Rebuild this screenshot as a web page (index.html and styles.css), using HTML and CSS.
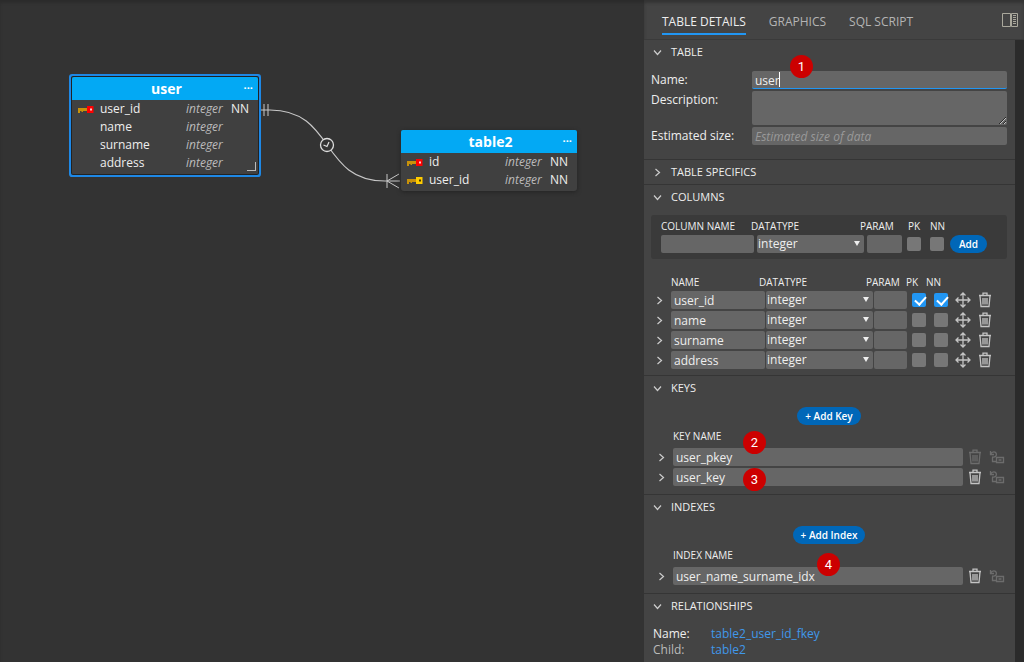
FILE: index.html
```
<!DOCTYPE html>
<html lang="en">
<head>
    <meta charset="UTF-8">
    <meta name="viewport" content="width=device-width, initial-scale=1.0">
    <title>Table details</title>
    <link rel="stylesheet" href="styles.css">
</head>
<body>
    <!-- shared icons -->
    <svg class="sprite" aria-hidden="true">
        <symbol id="down" viewBox="0 0 9 9"><path d="M1 2.5l3.5 4L8 2.5" fill="none" stroke="currentColor" stroke-width="1.2"/></symbol>
        <symbol id="right" viewBox="0 0 9 9"><path d="M2.5 1l4 3.5-4 3.5" fill="none" stroke="currentColor" stroke-width="1.2"/></symbol>
        <symbol id="trash" viewBox="0 0 14 16"><path d="M1 3.5h12M5 3V1.2h4V3M2 4l1 10.5h8L12 4M5 6v6.5M7 6v6.5M9 6v6.5" fill="none" stroke="currentColor" stroke-width="1.3"/></symbol>
        <symbol id="move" viewBox="0 0 16 16"><path d="M8 1v14M1 8h14M5.5 3.5L8 1l2.5 2.5M5.5 12.5L8 15l2.5-2.5M3.5 5.5L1 8l2.5 2.5M12.5 5.5L15 8l-2.5 2.5" fill="none" stroke="currentColor" stroke-width="1.3"/></symbol>
        <symbol id="relate" viewBox="0 0 16 14"><path d="M1.5 1v3.5H5M1.5 4.2C3 1.2 7 1 7.4 4.2 7.6 6.5 5.5 7.2 3 7.2M3.5 7.5v4h4M7.5 7.5h7v5h-7zM9.5 10h3" fill="none" stroke="currentColor" stroke-width="1.3"/></symbol>
        <symbol id="pkey" viewBox="0 0 16 9"><path d="M0 3h9v3H5v1H3.500V6H2v2H0z" fill="#c8920a"/><path d="M9 1h6.500v7H9z" fill="#f00"/><path d="M12 3.500h2v2h-2z" fill="#fcc"/></symbol>
        <symbol id="fkey" viewBox="0 0 16 9"><path d="M0 3h9v3H5v1H3.500V6H2v2H0z" fill="#c8920a"/><path d="M9 1h6.500v7H9z" fill="#fc0"/><path d="M12 3.500h2v2h-2z" fill="#4a3b00"/></symbol>
    </svg>

    <div class="app">
        <main class="canvas">
            <svg class="relation" width="644" height="220" fill="none" stroke="#c8c8c8">
                <path d="M260 110h10C335 110 320 181 385 181h15" stroke-width="1.2"/>
                <path d="M264 104v12M268 104v12M387 174v14M399 174l-12 7 12 7"/>
                <circle cx="327" cy="145" r="6.5" fill="#333" stroke="#ddd" stroke-width="1.3"/>
                <path d="M323.500 145l3.500 1.500 2-4.500" stroke="#ddd" stroke-width="1.200"/>
            </svg>

            <section class="entity selected entity-user">
                <h2>user<button class="more" aria-label="More">···</button></h2>
                <table>
                    <tr><td class="key"><svg><use href="#pkey"/></svg></td><td>user_id</td><td class="type">integer</td><td class="nn">NN</td></tr>
                    <tr><td class="key"></td><td>name</td><td class="type">integer</td><td class="nn"></td></tr>
                    <tr><td class="key"></td><td>surname</td><td class="type">integer</td><td class="nn"></td></tr>
                    <tr><td class="key"></td><td>address</td><td class="type">integer</td><td class="nn"></td></tr>
                </table>
                <span class="corner"></span>
            </section>

            <section class="entity entity-table2">
                <h2>table2<button class="more" aria-label="More">···</button></h2>
                <table>
                    <tr><td class="key"><svg><use href="#pkey"/></svg></td><td>id</td><td class="type">integer</td><td class="nn">NN</td></tr>
                    <tr><td class="key"><svg><use href="#fkey"/></svg></td><td>user_id</td><td class="type">integer</td><td class="nn">NN</td></tr>
                </table>
            </section>
        </main>

        <aside class="sidebar">
            <nav class="tabs">
                <button class="tab active">TABLE DETAILS</button>
                <button class="tab">GRAPHICS</button>
                <button class="tab">SQL SCRIPT</button>
                <button class="dock" aria-label="Dock panel">
                    <svg width="18" height="16" fill="none" stroke="#aaa89c"><path d="M1.500 1.500h8v13h-8zM10.500 1.500h6v13h-6z"/><path d="M13.500 3v10" stroke-width="3" stroke-dasharray="1 1"/></svg>
                </button>
            </nav>

            <div class="panels">
                <section class="panel">
                    <h3><svg class="chev"><use href="#down"/></svg>TABLE</h3>
                    <div class="details">
                        <label for="name">Name:</label>
                        <div class="name-field"><input type="text" id="name" class="current" value="user"><i class="caret"></i></div>
                        <label for="description">Description:</label>
                        <textarea id="description"></textarea>
                        <label for="size">Estimated size:</label>
                        <input type="text" id="size" placeholder="Estimated size of data">
                    </div>
                    <span class="badge badge-1">1</span>
                </section>

                <section class="panel">
                    <h3><svg class="chev"><use href="#right"/></svg>TABLE SPECIFICS</h3>
                </section>

                <section class="panel columns">
                    <h3><svg class="chev"><use href="#down"/></svg>COLUMNS</h3>
                    <form class="add-column">
                        <div class="add-labels">
                            <label for="new-name">COLUMN NAME</label>
                            <label for="new-type">DATATYPE</label>
                            <label for="new-param">PARAM</label>
                            <label for="new-pk">PK</label>
                            <label for="new-nn">NN</label>
                        </div>
                        <div class="add-fields">
                            <input type="text" id="new-name">
                            <span class="select"><select id="new-type"><option>integer</option></select></span>
                            <input type="text" id="new-param">
                            <input type="checkbox" id="new-pk">
                            <input type="checkbox" id="new-nn">
                            <button type="button" class="btn">Add</button>
                        </div>
                    </form>
                    <table class="column-list">
                        <thead>
                            <tr><th></th><th>NAME</th><th>DATATYPE</th><th>PARAM</th><th>PK</th><th>NN</th></tr>
                        </thead>
                        <tbody>
                            <tr>
                                <td><button class="icon" aria-label="Expand"><svg class="chev"><use href="#right"/></svg></button></td>
                                <td><input type="text" aria-label="Name" value="user_id"></td>
                                <td><span class="select"><select aria-label="Datatype"><option>integer</option></select></span></td>
                                <td><input type="text" aria-label="Param"></td>
                                <td><input type="checkbox" aria-label="PK" checked></td>
                                <td><input type="checkbox" aria-label="NN" checked></td>
                                <td><button class="icon" aria-label="Move"><svg class="move"><use href="#move"/></svg></button></td>
                                <td><button class="icon" aria-label="Delete"><svg class="trash"><use href="#trash"/></svg></button></td>
                            </tr>
                            <tr>
                                <td><button class="icon" aria-label="Expand"><svg class="chev"><use href="#right"/></svg></button></td>
                                <td><input type="text" aria-label="Name" value="name"></td>
                                <td><span class="select"><select aria-label="Datatype"><option>integer</option></select></span></td>
                                <td><input type="text" aria-label="Param"></td>
                                <td><input type="checkbox" aria-label="PK"></td>
                                <td><input type="checkbox" aria-label="NN"></td>
                                <td><button class="icon" aria-label="Move"><svg class="move"><use href="#move"/></svg></button></td>
                                <td><button class="icon" aria-label="Delete"><svg class="trash"><use href="#trash"/></svg></button></td>
                            </tr>
                            <tr>
                                <td><button class="icon" aria-label="Expand"><svg class="chev"><use href="#right"/></svg></button></td>
                                <td><input type="text" aria-label="Name" value="surname"></td>
                                <td><span class="select"><select aria-label="Datatype"><option>integer</option></select></span></td>
                                <td><input type="text" aria-label="Param"></td>
                                <td><input type="checkbox" aria-label="PK"></td>
                                <td><input type="checkbox" aria-label="NN"></td>
                                <td><button class="icon" aria-label="Move"><svg class="move"><use href="#move"/></svg></button></td>
                                <td><button class="icon" aria-label="Delete"><svg class="trash"><use href="#trash"/></svg></button></td>
                            </tr>
                            <tr>
                                <td><button class="icon" aria-label="Expand"><svg class="chev"><use href="#right"/></svg></button></td>
                                <td><input type="text" aria-label="Name" value="address"></td>
                                <td><span class="select"><select aria-label="Datatype"><option>integer</option></select></span></td>
                                <td><input type="text" aria-label="Param"></td>
                                <td><input type="checkbox" aria-label="PK"></td>
                                <td><input type="checkbox" aria-label="NN"></td>
                                <td><button class="icon" aria-label="Move"><svg class="move"><use href="#move"/></svg></button></td>
                                <td><button class="icon" aria-label="Delete"><svg class="trash"><use href="#trash"/></svg></button></td>
                            </tr>
                        </tbody>
                    </table>
                </section>

                <section class="panel">
                    <h3><svg class="chev"><use href="#down"/></svg>KEYS</h3>
                    <div class="items">
                        <button class="btn">+ Add Key</button>
                        <div class="caption">KEY NAME</div>
                        <div class="item">
                            <button class="icon" aria-label="Expand"><svg class="chev"><use href="#right"/></svg></button>
                            <input type="text" aria-label="Key name" value="user_pkey">
                            <button class="icon" aria-label="Delete" disabled><svg class="trash"><use href="#trash"/></svg></button>
                            <button class="icon" aria-label="Relate" disabled><svg class="move"><use href="#relate"/></svg></button>
                        </div>
                        <div class="item">
                            <button class="icon" aria-label="Expand"><svg class="chev"><use href="#right"/></svg></button>
                            <input type="text" aria-label="Key name" value="user_key">
                            <button class="icon" aria-label="Delete"><svg class="trash"><use href="#trash"/></svg></button>
                            <button class="icon" aria-label="Relate" disabled><svg class="move"><use href="#relate"/></svg></button>
                        </div>
                    </div>
                    <span class="badge badge-2">2</span>
                    <span class="badge badge-3">3</span>
                </section>

                <section class="panel">
                    <h3><svg class="chev"><use href="#down"/></svg>INDEXES</h3>
                    <div class="items">
                        <button class="btn">+ Add Index</button>
                        <div class="caption">INDEX NAME</div>
                        <div class="item">
                            <button class="icon" aria-label="Expand"><svg class="chev"><use href="#right"/></svg></button>
                            <input type="text" aria-label="Index name" value="user_name_surname_idx">
                            <button class="icon" aria-label="Delete"><svg class="trash"><use href="#trash"/></svg></button>
                            <button class="icon" aria-label="Relate" disabled><svg class="move"><use href="#relate"/></svg></button>
                        </div>
                    </div>
                    <span class="badge badge-4">4</span>
                </section>

                <section class="panel">
                    <h3><svg class="chev"><use href="#down"/></svg>RELATIONSHIPS</h3>
                    <dl>
                        <dt>Name:</dt><dd><a href="#">table2_user_id_fkey</a></dd>
                        <dt class="muted">Child:</dt><dd><a href="#">table2</a></dd>
                    </dl>
                </section>
            </div>
        </aside>
    </div>
</body>
</html>
```
FILE: styles.css
```
* {
    box-sizing: border-box;
}
body {
    margin: 0;
    background: #333;
    color: #eee;
    font: 12px/16px "Open Sans", sans-serif;
}
input, select, textarea, button {
    font: inherit;
    color: inherit;
    border: 0;
    margin: 0;
    padding: 0;
}
button {
    background: none;
    cursor: pointer;
}
.sprite {
    display: none;
}
.app {
    display: flex;
    height: 100vh;
    overflow: hidden;
    box-shadow: inset 0 3px 3px #2c2c2c;
}

/* diagram */
.canvas {
    flex: 1;
    position: relative;
    overflow: hidden;
}
.relation {
    position: absolute;
    left: 0;
    top: 0;
}
.entity {
    position: absolute;
    background: #404040;
    border-radius: 3px;
    box-shadow: 0 1px 4px #222;
}
.entity-user {
    left: 72px;
    top: 77px;
    width: 186px;
    height: 97px;
}
.entity-table2 {
    left: 401px;
    top: 130px;
    width: 176px;
    height: 61px;
}
.entity.selected {
    border-radius: 1px;
    box-shadow: 0 0 0 1px #222, 0 0 0 3px #1e88e5;
}
.entity h2 {
    position: relative;
    margin: 0;
    background: #03a9f4;
    border-radius: 2px 2px 0 0;
    color: #fff;
    font-size: 14px;
    line-height: 23px;
    padding-left: 3px;
    text-align: center;
}
.more {
    position: absolute;
    right: 5px;
    top: 0;
    font-size: 11px;
    font-weight: bold;
    line-height: 22px;
}
.entity table {
    width: 100%;
    border-collapse: collapse;
    table-layout: fixed;
}
.entity td {
    height: 18px;
    padding: 0;
}
.entity .key {
    width: 28px;
    padding-left: 6px;
}
.key svg {
    display: block;
    width: 16px;
    height: 9px;
}
.entity .type {
    width: 45px;
    color: #bbb;
    font-style: italic;
}
.entity .nn {
    width: 27px;
}
.corner {
    position: absolute;
    right: 2px;
    bottom: 3px;
    width: 9px;
    height: 9px;
    border: solid #bbb;
    border-width: 0 1px 1px 0;
}

/* side panel */
.sidebar {
    width: 380px;
    display: flex;
    flex-direction: column;
    background: #2b2b2b;
}
.tabs {
    display: flex;
    gap: 23px;
    height: 40px;
    padding: 7px 5px 4px 18px;
    background: #444;
    border-bottom: 1px solid #3a3a3a;
    box-shadow: inset 0 3px 3px #333;
}
.tab {
    padding-top: 3px;
    color: #b4b4b4;
    border-bottom: 2px solid transparent;
}
.tab.active {
    color: #eee;
    border-color: #2196f3;
}
.dock {
    margin-left: auto;
    padding-bottom: 3px;
}
.dock svg {
    display: block;
}
.panels {
    flex: 1;
    margin-right: 9px;
    background: #444;
    overflow: hidden;
}
.panel {
    position: relative;
    border-bottom: 1px solid #353535;
}
.panel h3 {
    display: flex;
    align-items: center;
    gap: 9px;
    margin: 0;
    padding-left: 9px;
    font-size: 11px;
    font-weight: normal;
    line-height: 24px;
    height: 24px;
}
.chev {
    display: block;
    width: 9px;
    height: 9px;
    color: #ccc;
}
input[type=text], textarea, select {
    display: block;
    width: 100%;
    min-width: 0;
    height: 18px;
    padding: 0 3px;
    background: #666;
    border-radius: 2px;
}
textarea {
    height: 34px;
}
input::placeholder {
    color: #999;
    font-style: italic;
}
.details {
    display: grid;
    grid-template-columns: 101px 1fr;
    gap: 2px 0;
    padding: 7px 8px 14px 7px;
}
.details label {
    padding-top: 1px;
}
.name-field {
    position: relative;
}
.details .current {
    padding-top: 1px;
    border-bottom: 1px solid #2196f3;
}
.caret {
    position: absolute;
    left: 27px;
    top: 1px;
    width: 1px;
    height: 15px;
    background: #fff;
}
.select {
    position: relative;
    display: block;
}
.select select {
    appearance: none;
    padding: 0 1px;
}
.select::after {
    content: "";
    position: absolute;
    right: 4px;
    top: 6px;
    border: solid transparent;
    border-width: 5px 3px 0;
    border-top-color: #eee;
    pointer-events: none;
}
input[type=checkbox] {
    appearance: none;
    display: block;
    width: 14px;
    height: 14px;
    background: #777;
    border-radius: 2px;
}
input[type=checkbox]:checked {
    background: #2196f3;
}
input[type=checkbox]:checked::after {
    content: "";
    display: block;
    width: 5px;
    height: 9px;
    margin: 1px 0 0 5px;
    border: solid #fff;
    border-width: 0 2px 2px 0;
    transform: rotate(42deg);
}
.btn {
    background: #0067b8;
    border-radius: 9px;
    color: #fff;
    font-size: 10px;
    font-weight: 600;
    line-height: 18px;
    padding: 0 8px;
}

.add-column {
    margin: 6px 8px 15px 7px;
    padding: 3px 10px 6px;
    background: #3a3a3a;
    border-radius: 3px;
}
.add-labels, .add-fields {
    display: grid;
    align-items: center;
}
.add-labels {
    grid-template-columns: 90px 109px 48px 22px 1fr;
    font-size: 10px;
    line-height: 17px;
}
.add-fields {
    grid-template-columns: 93px 107px 35px 20px 19px 37px;
    column-gap: 3px;
}
.add-fields input[type=checkbox] {
    margin-left: 2px;
}
.column-list {
    display: block;
    padding: 0 7px 5px;
}
.column-list thead, .column-list tbody {
    display: block;
}
.column-list tr {
    display: grid;
    align-items: center;
    grid-template-columns: 20px 95px 108px 34px 22px 22px 22px 22px;
    height: 20px;
}
.column-list thead tr {
    grid-template-columns: 20px 88px 107px 40px 20px 1fr;
    height: 16px;
}
.column-list th {
    padding: 0;
    font-size: 10px;
    font-weight: normal;
    text-align: left;
}
.column-list td {
    padding: 0 1px 0 0;
}
.column-list input[type=checkbox] {
    margin: 0 auto;
}
.icon {
    display: block;
    margin: 0 auto;
    color: #c4c4c4;
}
.icon:disabled {
    color: #6c6c6c;
}
.icon svg {
    display: block;
}
.icon .chev {
    margin-right: 2px;
}
.trash {
    width: 14px;
    height: 16px;
}
.move {
    width: 16px;
    height: 16px;
}

.items {
    padding: 7px 8px 7px 7px;
}
.items .btn {
    display: block;
    margin: 0 auto;
}
.caption {
    padding-left: 22px;
    font-size: 10px;
    line-height: 22px;
}
.item {
    display: grid;
    grid-template-columns: 22px 1fr 24px 20px;
    align-items: center;
    height: 20px;
}
dl {
    display: grid;
    grid-template-columns: 58px 1fr;
    margin: 0;
    padding: 8px 9px;
}
dd {
    margin: 0;
}
.muted {
    color: #bbb;
}
a {
    color: #4098ea;
    text-decoration: none;
}

/* numbered markers */
.badge {
    position: absolute;
    width: 23px;
    height: 23px;
    border-radius: 50%;
    background: #c00;
    color: #fff;
    font: 13px/23px Roboto, sans-serif;
    text-align: center;
}
.badge-1 {
    left: 146px;
    top: 15px;
}
.badge-2 {
    left: 99px;
    top: 55px;
}
.badge-3 {
    left: 99px;
    top: 92px;
}
.badge-4 {
    left: 173px;
    top: 58px;
}
```
